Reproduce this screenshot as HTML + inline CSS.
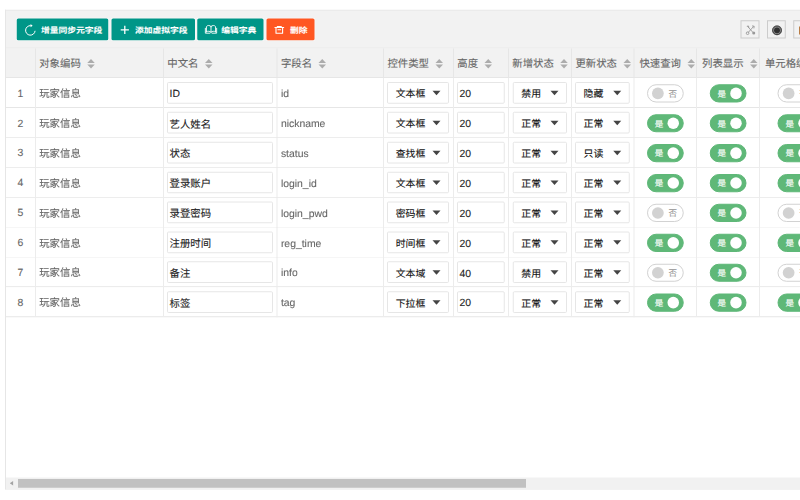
<!DOCTYPE html>
<html lang="zh-CN"><head><meta charset="utf-8"><title>字段管理</title>
<style>
html,body{margin:0;padding:0;background:#fff}
body{width:800px;height:500px;overflow:hidden;font-family:"Liberation Sans","Noto Sans CJK SC",sans-serif}
#stage{position:absolute;left:0;top:0;width:3200px;height:2000px;overflow:hidden;transform:scale(0.25);transform-origin:0 0;color:#666;font-size:41.6px;text-rendering:geometricPrecision;-webkit-text-stroke:0.4px currentColor;font-family:"Liberation Sans","Noto Sans CJK SC",sans-serif}
#stage div,#stage span,#stage i,#stage b,#stage svg{position:absolute;box-sizing:border-box}
#stage .cj{position:relative;display:inline-block;vertical-align:baseline;line-height:1em;white-space:nowrap;font-family:"Liberation Sans","Noto Sans CJK SC",sans-serif}
.tool{background:#f2f2f2}
.hl{height:4px;background:#e6e6e6}
.vl{width:4px;background:#e6e6e6}
.vl.bv{background:#ececec}
.ob{background:#e6e6e6}
.btn{box-shadow:0 0 0 3.2px rgba(255,255,255,.55);background:#009688;border-radius:6.4px;color:#fff;font-size:35.6px;white-space:nowrap}
.btn.danger{background:#FF5722}
.btn .bl{top:4.2px;white-space:nowrap}
.btn .cj{transform:scale(.985,.88);transform-origin:50% 95%;font-weight:bold}
.tbox{border:4px solid #ccc;background:#f2f2f2}
.thead{background:#f2f2f2}
.th{top:0;height:100%;white-space:nowrap}
.ht{top:0;height:100%;line-height:119.4px;white-space:nowrap}
.sort{display:inline-block;position:relative!important;width:30.4px;height:37.2px;margin-left:25.6px;vertical-align:-6px}
.sort b{left:0;width:0;height:0;border-left:15.2px solid transparent;border-right:15.2px solid transparent}
.sort .up{top:0;border-bottom:16px solid #acacac}
.sort .dn{top:21.2px;border-top:16px solid #acacac}
.tr{background:#fff}
.td{top:0;height:100%;white-space:nowrap;line-height:120.4px}
.td.num{text-align:center}
.ct{top:1.6px;white-space:nowrap}
.inp{top:15.6px;height:86.8px;border:4px solid #e6e6e6;border-radius:6.4px;background:#fff;color:#222;line-height:82.8px}
.iv{left:5.6px;top:1.2px;white-space:nowrap}
.iv .cj{top:2px}
.sel{color:#111;font-size:39.6px}
.sv{left:30.4px;top:3.6px;white-space:nowrap}
.arr{right:30.4px;top:31.6px;width:0;height:0;border-left:16.4px solid transparent;border-right:16.4px solid transparent;border-top:18px solid #444}
.sw{left:50%;margin-left:-73.6px;top:24.8px;width:147.2px;height:72.8px;border:4px solid #d2d2d2;border-radius:36.4px;background:#fff;font-size:34px;color:#999;line-height:68px}
.sw i{left:16.8px;top:9.2px;width:46.4px;height:46.4px;border-radius:50%;background:#d2d2d2}
.sw .swt{left:82.4px;top:0}
.sw.on{background:#5FB878;border-color:#5FB878;color:#fff}
.sw.on i{left:auto;right:14.4px;background:#fff}
.sw.on .swt{left:27.6px}
.sbt{background:#f1f1f1}
.sbth{background:#c1c1c1}
</style></head>
<body>
<div id="stage">
<div class="tool" style="left:23.6px;top:42.8px;width:3600px;height:146.8px"></div>
<div class="hl" style="left:23.6px;top:189.6px;width:3600px"></div>
<div class="btn b1" style="left:66.8px;top:74px;width:366px;height:87.2px"><svg class="ico" viewBox="0 0 40 22" style="left:0;top:0;width:160px;height:88px"><path d="M18.33 12.31A4.75 4.75 0 1 1 14.01 7.17" fill="none" stroke="#fff" stroke-width="1"/><path d="M13.81 5.47L15.91 7.37L13.81 8.77Z" fill="#fff"/></svg><span class="bl" style="left:94.8px;line-height:87.2px"><span class="cj">增量同步元字段</span></span></div>
<div class="btn b2" style="left:445.6px;top:74px;width:334.4px;height:87.2px"><svg class="ico" viewBox="0 0 40 22" style="left:0;top:0;width:160px;height:88px"><path d="M9.20 11.30H17.40M13.30 7.20V15.40" fill="none" stroke="#fff" stroke-width="1.3"/></svg><span class="bl" style="left:92.8px;line-height:87.2px"><span class="cj">添加虚拟字段</span></span></div>
<div class="btn b3" style="left:789.2px;top:74px;width:264.8px;height:87.2px"><svg class="ico" viewBox="0 0 40 22" style="left:0;top:0;width:160px;height:88px"><path d="M13.75 8.00C12.55 6.60 10.00 6.50 9.20 8.20V13.40M13.75 8.00C14.95 6.60 17.50 6.50 18.30 8.20V13.40M13.75 8.00V14.00M8.10 9.80V14.70H12.65M19.40 9.80V14.70H14.85M9.20 13.20C10.60 12.40 12.75 12.60 13.75 13.80C14.75 12.60 16.90 12.40 18.30 13.20" fill="none" stroke="#fff" stroke-width="0.9" stroke-linecap="round" stroke-linejoin="round"/></svg><span class="bl" style="left:94.8px;line-height:87.2px"><span class="cj">编辑字典</span></span></div>
<div class="btn b4 danger" style="left:1065.6px;top:74px;width:192.8px;height:87.2px"><svg class="ico" viewBox="0 0 40 22" style="left:0;top:0;width:160px;height:88px"><path d="M8.00 9.00H17.60M10.80 8.80V8.00H14.80V8.80M9.50 9.30V14.80H16.10V9.30M11.00 11.30H14.60" fill="none" stroke="#fff" stroke-width="1.1" stroke-linejoin="round"/></svg><span class="bl" style="left:93.2px;line-height:87.2px"><span class="cj">删除</span></span></div>
<div class="tbox" style="left:2962px;top:80.8px;width:76px;height:73.6px"><svg viewBox="0 0 19 18.4" style="position:absolute;left:0;top:0;width:100%;height:100%"><g fill="none" stroke="#929292" stroke-width="0.95" stroke-linecap="round"><path d="M7.1 6.1L12.7 12.4"/><path d="M13.2 6.2L7.6 12.5"/><path d="M12.2 5.3L14.2 5.6L13.9 7.6"/><path d="M6.4 5.6L7.8 5.3L8.1 6.8"/></g><circle cx="6.8" cy="13.4" r="1.5" fill="none" stroke="#929292" stroke-width="0.9"/><circle cx="13.7" cy="13.3" r="1.7" fill="#999"/></svg></div>
<div class="tbox" style="left:3068px;top:80.8px;width:75.2px;height:73.6px"><svg viewBox="0 0 18.7 18.4" style="position:absolute;left:0;top:0;width:100%;height:100%"><circle cx="10.05" cy="10.2" r="5.5" fill="#8a8a8a"/><circle cx="10.05" cy="10.2" r="4.9" fill="none" stroke="#2a2a2a" stroke-width="0.9"/><circle cx="10.05" cy="10.2" r="3.3" fill="#303030"/></svg></div>
<div class="tbox" style="left:3172.8px;top:80.8px;width:75.2px;height:73.6px"><div style="position:absolute;left:19.6px;top:21.6px;width:16px;height:31.2px;background:#b97d45"></div></div>
<div class="thead" style="left:23.6px;top:193.6px;width:3600px;height:114.6px">
<div class="th" style="left:120px;width:512.4px"><span class="ht" style="left:13.2px"><span class="cj">对象编码</span><i class="sort"><b class="up"></b><b class="dn"></b></i></span></div>
<div class="th" style="left:632.4px;width:454.4px"><span class="ht" style="left:13.2px"><span class="cj">中文名</span><i class="sort"><b class="up"></b><b class="dn"></b></i></span></div>
<div class="th" style="left:1086.8px;width:426px"><span class="ht" style="left:13.2px"><span class="cj">字段名</span><i class="sort"><b class="up"></b><b class="dn"></b></i></span></div>
<div class="th" style="left:1512.8px;width:279.6px"><span class="ht" style="left:13.2px"><span class="cj">控件类型</span><i class="sort"><b class="up"></b><b class="dn"></b></i></span></div>
<div class="th" style="left:1792.4px;width:220px"><span class="ht" style="left:13.2px"><span class="cj">高度</span><i class="sort"><b class="up"></b><b class="dn"></b></i></span></div>
<div class="th" style="left:2012.4px;width:252.4px"><span class="ht" style="left:13.2px"><span class="cj">新增状态</span><i class="sort"><b class="up"></b><b class="dn"></b></i></span></div>
<div class="th" style="left:2264.8px;width:249.6px"><span class="ht" style="left:13.2px"><span class="cj">更新状态</span><i class="sort"><b class="up"></b><b class="dn"></b></i></span></div>
<div class="th" style="left:2514.4px;width:250.4px"><span class="ht" style="left:19.6px"><span class="cj">快速查询</span><i class="sort"><b class="up"></b><b class="dn"></b></i></span></div>
<div class="th" style="left:2764.8px;width:251.6px"><span class="ht" style="left:19.6px"><span class="cj">列表显示</span><i class="sort"><b class="up"></b><b class="dn"></b></i></span></div>
<div class="th" style="left:3016.4px;width:292px"><span class="ht" style="left:19.6px"><span class="cj">单元格编辑</span><i class="sort"><b class="up"></b><b class="dn"></b></i></span></div>
</div>
<div class="hl" style="left:23.6px;top:308.2px;width:3600px"></div>
<div class="vl hv" style="left:139.6px;top:193.6px;height:118.6px"></div>
<div class="vl hv" style="left:652px;top:193.6px;height:118.6px"></div>
<div class="vl hv" style="left:1106.4px;top:193.6px;height:118.6px"></div>
<div class="vl hv" style="left:1532.4px;top:193.6px;height:118.6px"></div>
<div class="vl hv" style="left:1812px;top:193.6px;height:118.6px"></div>
<div class="vl hv" style="left:2032px;top:193.6px;height:118.6px"></div>
<div class="vl hv" style="left:2284.4px;top:193.6px;height:118.6px"></div>
<div class="vl hv" style="left:2534px;top:193.6px;height:118.6px"></div>
<div class="vl hv" style="left:2784.4px;top:193.6px;height:118.6px"></div>
<div class="vl hv" style="left:3036px;top:193.6px;height:118.6px"></div>
<div class="tr" style="left:23.6px;top:312.2px;width:3600px;height:115.6px">
<div class="td num" style="left:0;width:116px">1</div>
<div class="td " style="left:120px;width:508.4px"><span class="ct" style="left:13.2px"><span class="cj">玩家信息</span></span></div>
<div class="td " style="left:632.4px;width:450.4px"><div class="inp" style="left:12.4px;width:423.2px"><span class="iv">ID</span></div></div>
<div class="td " style="left:1086.8px;width:422px"><span class="ct" style="left:13.2px">id</span></div>
<div class="td " style="left:1512.8px;width:275.6px"><div class="inp sel" style="left:12px;width:248px"><span class="sv"><span class="cj">文本框</span></span><b class="arr"></b></div></div>
<div class="td " style="left:1792.4px;width:216px"><div class="inp" style="left:12px;width:190.8px"><span class="iv">20</span></div></div>
<div class="td " style="left:2012.4px;width:248.4px"><div class="inp sel" style="left:14.8px;width:217.6px"><span class="sv"><span class="cj">禁用</span></span><b class="arr"></b></div></div>
<div class="td " style="left:2264.8px;width:245.6px"><div class="inp sel" style="left:11.6px;width:219.2px"><span class="sv"><span class="cj">隐藏</span></span><b class="arr"></b></div></div>
<div class="td c" style="left:2514.4px;width:246.4px"><div class="sw"><i></i><span class="swt"><span class="cj">否</span></span></div></div>
<div class="td c" style="left:2764.8px;width:247.6px"><div class="sw on"><span class="swt"><span class="cj">是</span></span><i></i></div></div>
<div class="td c" style="left:3016.4px;width:288px"><div class="sw"><i></i><span class="swt"><span class="cj">否</span></span></div></div>
</div>
<div class="hl" style="left:23.6px;top:427.8px;width:3600px"></div>
<div class="tr" style="left:23.6px;top:431.8px;width:3600px;height:115.6px">
<div class="td num" style="left:0;width:116px">2</div>
<div class="td " style="left:120px;width:508.4px"><span class="ct" style="left:13.2px"><span class="cj">玩家信息</span></span></div>
<div class="td " style="left:632.4px;width:450.4px"><div class="inp" style="left:12.4px;width:423.2px"><span class="iv"><span class="cj">艺人姓名</span></span></div></div>
<div class="td " style="left:1086.8px;width:422px"><span class="ct" style="left:13.2px">nickname</span></div>
<div class="td " style="left:1512.8px;width:275.6px"><div class="inp sel" style="left:12px;width:248px"><span class="sv"><span class="cj">文本框</span></span><b class="arr"></b></div></div>
<div class="td " style="left:1792.4px;width:216px"><div class="inp" style="left:12px;width:190.8px"><span class="iv">20</span></div></div>
<div class="td " style="left:2012.4px;width:248.4px"><div class="inp sel" style="left:14.8px;width:217.6px"><span class="sv"><span class="cj">正常</span></span><b class="arr"></b></div></div>
<div class="td " style="left:2264.8px;width:245.6px"><div class="inp sel" style="left:11.6px;width:219.2px"><span class="sv"><span class="cj">正常</span></span><b class="arr"></b></div></div>
<div class="td c" style="left:2514.4px;width:246.4px"><div class="sw on"><span class="swt"><span class="cj">是</span></span><i></i></div></div>
<div class="td c" style="left:2764.8px;width:247.6px"><div class="sw on"><span class="swt"><span class="cj">是</span></span><i></i></div></div>
<div class="td c" style="left:3016.4px;width:288px"><div class="sw on"><span class="swt"><span class="cj">是</span></span><i></i></div></div>
</div>
<div class="hl" style="left:23.6px;top:547.4px;width:3600px"></div>
<div class="tr" style="left:23.6px;top:551.4px;width:3600px;height:115.6px">
<div class="td num" style="left:0;width:116px">3</div>
<div class="td " style="left:120px;width:508.4px"><span class="ct" style="left:13.2px"><span class="cj">玩家信息</span></span></div>
<div class="td " style="left:632.4px;width:450.4px"><div class="inp" style="left:12.4px;width:423.2px"><span class="iv"><span class="cj">状态</span></span></div></div>
<div class="td " style="left:1086.8px;width:422px"><span class="ct" style="left:13.2px">status</span></div>
<div class="td " style="left:1512.8px;width:275.6px"><div class="inp sel" style="left:12px;width:248px"><span class="sv"><span class="cj">查找框</span></span><b class="arr"></b></div></div>
<div class="td " style="left:1792.4px;width:216px"><div class="inp" style="left:12px;width:190.8px"><span class="iv">20</span></div></div>
<div class="td " style="left:2012.4px;width:248.4px"><div class="inp sel" style="left:14.8px;width:217.6px"><span class="sv"><span class="cj">正常</span></span><b class="arr"></b></div></div>
<div class="td " style="left:2264.8px;width:245.6px"><div class="inp sel" style="left:11.6px;width:219.2px"><span class="sv"><span class="cj">只读</span></span><b class="arr"></b></div></div>
<div class="td c" style="left:2514.4px;width:246.4px"><div class="sw on"><span class="swt"><span class="cj">是</span></span><i></i></div></div>
<div class="td c" style="left:2764.8px;width:247.6px"><div class="sw on"><span class="swt"><span class="cj">是</span></span><i></i></div></div>
<div class="td c" style="left:3016.4px;width:288px"><div class="sw on"><span class="swt"><span class="cj">是</span></span><i></i></div></div>
</div>
<div class="hl" style="left:23.6px;top:667px;width:3600px"></div>
<div class="tr" style="left:23.6px;top:671px;width:3600px;height:115.6px">
<div class="td num" style="left:0;width:116px">4</div>
<div class="td " style="left:120px;width:508.4px"><span class="ct" style="left:13.2px"><span class="cj">玩家信息</span></span></div>
<div class="td " style="left:632.4px;width:450.4px"><div class="inp" style="left:12.4px;width:423.2px"><span class="iv"><span class="cj">登录账户</span></span></div></div>
<div class="td " style="left:1086.8px;width:422px"><span class="ct" style="left:13.2px">login_id</span></div>
<div class="td " style="left:1512.8px;width:275.6px"><div class="inp sel" style="left:12px;width:248px"><span class="sv"><span class="cj">文本框</span></span><b class="arr"></b></div></div>
<div class="td " style="left:1792.4px;width:216px"><div class="inp" style="left:12px;width:190.8px"><span class="iv">20</span></div></div>
<div class="td " style="left:2012.4px;width:248.4px"><div class="inp sel" style="left:14.8px;width:217.6px"><span class="sv"><span class="cj">正常</span></span><b class="arr"></b></div></div>
<div class="td " style="left:2264.8px;width:245.6px"><div class="inp sel" style="left:11.6px;width:219.2px"><span class="sv"><span class="cj">正常</span></span><b class="arr"></b></div></div>
<div class="td c" style="left:2514.4px;width:246.4px"><div class="sw on"><span class="swt"><span class="cj">是</span></span><i></i></div></div>
<div class="td c" style="left:2764.8px;width:247.6px"><div class="sw on"><span class="swt"><span class="cj">是</span></span><i></i></div></div>
<div class="td c" style="left:3016.4px;width:288px"><div class="sw on"><span class="swt"><span class="cj">是</span></span><i></i></div></div>
</div>
<div class="hl" style="left:23.6px;top:786.6px;width:3600px"></div>
<div class="tr" style="left:23.6px;top:790.6px;width:3600px;height:115.6px">
<div class="td num" style="left:0;width:116px">5</div>
<div class="td " style="left:120px;width:508.4px"><span class="ct" style="left:13.2px"><span class="cj">玩家信息</span></span></div>
<div class="td " style="left:632.4px;width:450.4px"><div class="inp" style="left:12.4px;width:423.2px"><span class="iv"><span class="cj">录登密码</span></span></div></div>
<div class="td " style="left:1086.8px;width:422px"><span class="ct" style="left:13.2px">login_pwd</span></div>
<div class="td " style="left:1512.8px;width:275.6px"><div class="inp sel" style="left:12px;width:248px"><span class="sv"><span class="cj">密码框</span></span><b class="arr"></b></div></div>
<div class="td " style="left:1792.4px;width:216px"><div class="inp" style="left:12px;width:190.8px"><span class="iv">20</span></div></div>
<div class="td " style="left:2012.4px;width:248.4px"><div class="inp sel" style="left:14.8px;width:217.6px"><span class="sv"><span class="cj">正常</span></span><b class="arr"></b></div></div>
<div class="td " style="left:2264.8px;width:245.6px"><div class="inp sel" style="left:11.6px;width:219.2px"><span class="sv"><span class="cj">正常</span></span><b class="arr"></b></div></div>
<div class="td c" style="left:2514.4px;width:246.4px"><div class="sw"><i></i><span class="swt"><span class="cj">否</span></span></div></div>
<div class="td c" style="left:2764.8px;width:247.6px"><div class="sw on"><span class="swt"><span class="cj">是</span></span><i></i></div></div>
<div class="td c" style="left:3016.4px;width:288px"><div class="sw"><i></i><span class="swt"><span class="cj">否</span></span></div></div>
</div>
<div class="hl" style="left:23.6px;top:906.2px;width:3600px"></div>
<div class="tr" style="left:23.6px;top:910.2px;width:3600px;height:115.6px">
<div class="td num" style="left:0;width:116px">6</div>
<div class="td " style="left:120px;width:508.4px"><span class="ct" style="left:13.2px"><span class="cj">玩家信息</span></span></div>
<div class="td " style="left:632.4px;width:450.4px"><div class="inp" style="left:12.4px;width:423.2px"><span class="iv"><span class="cj">注册时间</span></span></div></div>
<div class="td " style="left:1086.8px;width:422px"><span class="ct" style="left:13.2px">reg_time</span></div>
<div class="td " style="left:1512.8px;width:275.6px"><div class="inp sel" style="left:12px;width:248px"><span class="sv"><span class="cj">时间框</span></span><b class="arr"></b></div></div>
<div class="td " style="left:1792.4px;width:216px"><div class="inp" style="left:12px;width:190.8px"><span class="iv">20</span></div></div>
<div class="td " style="left:2012.4px;width:248.4px"><div class="inp sel" style="left:14.8px;width:217.6px"><span class="sv"><span class="cj">正常</span></span><b class="arr"></b></div></div>
<div class="td " style="left:2264.8px;width:245.6px"><div class="inp sel" style="left:11.6px;width:219.2px"><span class="sv"><span class="cj">正常</span></span><b class="arr"></b></div></div>
<div class="td c" style="left:2514.4px;width:246.4px"><div class="sw on"><span class="swt"><span class="cj">是</span></span><i></i></div></div>
<div class="td c" style="left:2764.8px;width:247.6px"><div class="sw on"><span class="swt"><span class="cj">是</span></span><i></i></div></div>
<div class="td c" style="left:3016.4px;width:288px"><div class="sw on"><span class="swt"><span class="cj">是</span></span><i></i></div></div>
</div>
<div class="hl" style="left:23.6px;top:1025.8px;width:3600px"></div>
<div class="tr" style="left:23.6px;top:1029.8px;width:3600px;height:115.6px">
<div class="td num" style="left:0;width:116px">7</div>
<div class="td " style="left:120px;width:508.4px"><span class="ct" style="left:13.2px"><span class="cj">玩家信息</span></span></div>
<div class="td " style="left:632.4px;width:450.4px"><div class="inp" style="left:12.4px;width:423.2px"><span class="iv"><span class="cj">备注</span></span></div></div>
<div class="td " style="left:1086.8px;width:422px"><span class="ct" style="left:13.2px">info</span></div>
<div class="td " style="left:1512.8px;width:275.6px"><div class="inp sel" style="left:12px;width:248px"><span class="sv"><span class="cj">文本域</span></span><b class="arr"></b></div></div>
<div class="td " style="left:1792.4px;width:216px"><div class="inp" style="left:12px;width:190.8px"><span class="iv">40</span></div></div>
<div class="td " style="left:2012.4px;width:248.4px"><div class="inp sel" style="left:14.8px;width:217.6px"><span class="sv"><span class="cj">禁用</span></span><b class="arr"></b></div></div>
<div class="td " style="left:2264.8px;width:245.6px"><div class="inp sel" style="left:11.6px;width:219.2px"><span class="sv"><span class="cj">正常</span></span><b class="arr"></b></div></div>
<div class="td c" style="left:2514.4px;width:246.4px"><div class="sw"><i></i><span class="swt"><span class="cj">否</span></span></div></div>
<div class="td c" style="left:2764.8px;width:247.6px"><div class="sw on"><span class="swt"><span class="cj">是</span></span><i></i></div></div>
<div class="td c" style="left:3016.4px;width:288px"><div class="sw"><i></i><span class="swt"><span class="cj">否</span></span></div></div>
</div>
<div class="hl" style="left:23.6px;top:1145.4px;width:3600px"></div>
<div class="tr" style="left:23.6px;top:1149.4px;width:3600px;height:115.6px">
<div class="td num" style="left:0;width:116px">8</div>
<div class="td " style="left:120px;width:508.4px"><span class="ct" style="left:13.2px"><span class="cj">玩家信息</span></span></div>
<div class="td " style="left:632.4px;width:450.4px"><div class="inp" style="left:12.4px;width:423.2px"><span class="iv"><span class="cj">标签</span></span></div></div>
<div class="td " style="left:1086.8px;width:422px"><span class="ct" style="left:13.2px">tag</span></div>
<div class="td " style="left:1512.8px;width:275.6px"><div class="inp sel" style="left:12px;width:248px"><span class="sv"><span class="cj">下拉框</span></span><b class="arr"></b></div></div>
<div class="td " style="left:1792.4px;width:216px"><div class="inp" style="left:12px;width:190.8px"><span class="iv">20</span></div></div>
<div class="td " style="left:2012.4px;width:248.4px"><div class="inp sel" style="left:14.8px;width:217.6px"><span class="sv"><span class="cj">正常</span></span><b class="arr"></b></div></div>
<div class="td " style="left:2264.8px;width:245.6px"><div class="inp sel" style="left:11.6px;width:219.2px"><span class="sv"><span class="cj">正常</span></span><b class="arr"></b></div></div>
<div class="td c" style="left:2514.4px;width:246.4px"><div class="sw on"><span class="swt"><span class="cj">是</span></span><i></i></div></div>
<div class="td c" style="left:2764.8px;width:247.6px"><div class="sw on"><span class="swt"><span class="cj">是</span></span><i></i></div></div>
<div class="td c" style="left:3016.4px;width:288px"><div class="sw on"><span class="swt"><span class="cj">是</span></span><i></i></div></div>
</div>
<div class="hl" style="left:23.6px;top:1265px;width:3600px"></div>
<div class="vl bv" style="left:139.6px;top:312.2px;height:956.8px"></div>
<div class="vl bv" style="left:652px;top:312.2px;height:956.8px"></div>
<div class="vl bv" style="left:1106.4px;top:312.2px;height:956.8px"></div>
<div class="vl bv" style="left:1532.4px;top:312.2px;height:956.8px"></div>
<div class="vl bv" style="left:1812px;top:312.2px;height:956.8px"></div>
<div class="vl bv" style="left:2032px;top:312.2px;height:956.8px"></div>
<div class="vl bv" style="left:2284.4px;top:312.2px;height:956.8px"></div>
<div class="vl bv" style="left:2534px;top:312.2px;height:956.8px"></div>
<div class="vl bv" style="left:2784.4px;top:312.2px;height:956.8px"></div>
<div class="vl bv" style="left:3036px;top:312.2px;height:956.8px"></div>
<div class="vl ob" style="left:19.6px;top:38.8px;height:1918px"></div>
<div class="hl ob" style="left:19.6px;top:38.8px;width:3600px"></div>
<div class="hl ob" style="left:19.6px;top:1954.4px;width:3600px"></div>
<div class="sbt" style="left:23.6px;top:1909.6px;width:3600px;height:44.8px"><div class="sbth" style="left:48.8px;top:6px;width:2031.6px;height:35.2px"></div><svg viewBox="0 0 12 11.2" style="position:absolute;left:0;top:0;width:48px;height:44.8px"><path d="M3.8 5.7L7.1 3.4V8Z" fill="#a3a3a3"/></svg></div>
</div>
</body></html>
